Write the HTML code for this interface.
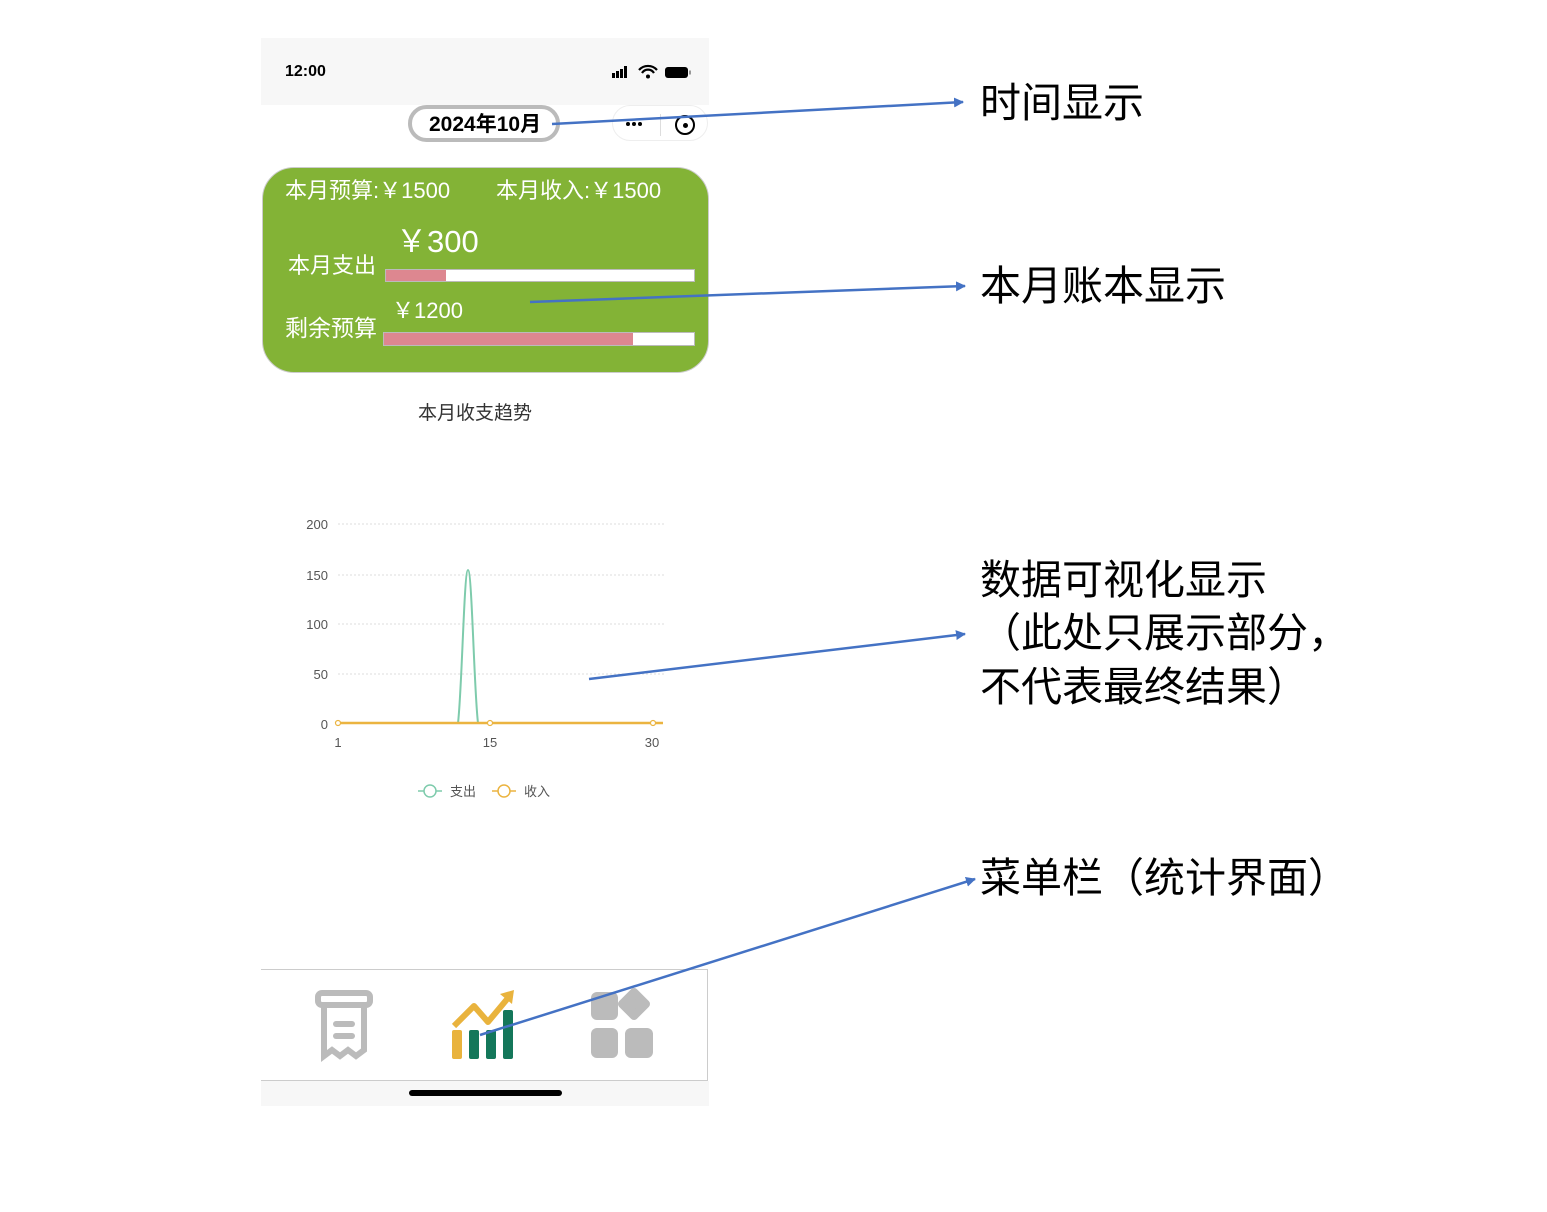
<!DOCTYPE html>
<html><head><meta charset="utf-8"><style>
body{margin:0;width:1547px;height:1212px;background:#fff;position:relative;overflow:hidden;font-family:"Liberation Sans","Noto Sans CJK SC",sans-serif}
.a{position:absolute;white-space:nowrap}
.w{color:#fff}
.ann{font-size:41px;color:#000;line-height:53px}
</style></head><body>
<div class="a" style="left:261px;top:38px;width:448px;height:67px;background:#f7f7f7"></div>
<div class="a" style="left:285px;top:63px;font-size:16px;font-weight:bold">12:00</div>
<svg class="a" style="left:610px;top:62px" width="84" height="20">
<rect x="2" y="11" width="3" height="5" fill="#000"/><rect x="6" y="9" width="3" height="7" fill="#000"/><rect x="10" y="7" width="3" height="9" fill="#000"/><rect x="14" y="4" width="3" height="12" fill="#000"/>
<path d="M29 8a12 12 0 0 1 18 0M32 11a7 7 0 0 1 12 0" stroke="#000" stroke-width="2.2" fill="none"/><circle cx="38" cy="14.5" r="2" fill="#000"/>
<rect x="55" y="5" width="23" height="11" rx="3" fill="#000"/><rect x="79" y="8.5" width="2" height="4" fill="#999"/>
</svg>
<div class="a" style="left:408px;top:105px;width:152px;height:37px;border:4px solid #bbb;border-radius:22px;box-sizing:border-box;background:#fff"></div>
<div class="a" style="left:429px;top:111px;font-size:21px;font-weight:bold;line-height:28px">2024年10月</div>
<div class="a" style="left:612px;top:105px;width:96px;height:36px;border:1px solid #eee;border-radius:18px;box-sizing:border-box"></div>
<div class="a" style="left:626px;top:122px;width:4px;height:4px;border-radius:2px;background:#000;box-shadow:6px 0 0 #000,12px 0 0 #000"></div>
<div class="a" style="left:660px;top:114px;width:1px;height:22px;background:#ddd"></div>
<div class="a" style="left:675px;top:115px;width:16px;height:16px;border:2px solid #000;border-radius:50%"></div>
<div class="a" style="left:683px;top:123px;width:5px;height:5px;background:#000;border-radius:50%"></div>

<div class="a" style="left:262px;top:167px;width:447px;height:206px;background:#83b336;border-radius:32px;border:1px solid #ccc;box-sizing:border-box"></div>
<div class="a w" style="left:285px;top:176px;font-size:22px;line-height:30px">本月预算:￥1500</div>
<div class="a w" style="left:496px;top:176px;font-size:22px;line-height:30px">本月收入:￥1500</div>
<div class="a w" style="left:396px;top:222px;font-size:31px;line-height:40px">￥300</div>
<div class="a w" style="left:288px;top:251px;font-size:22px;line-height:30px">本月支出</div>
<div class="a" style="left:385px;top:269px;width:310px;height:13px;background:#fff;border:1px solid #bbb;box-sizing:border-box"></div>
<div class="a" style="left:386px;top:270px;width:60px;height:11px;background:#dd8790"></div>
<div class="a w" style="left:392px;top:296px;font-size:22px;line-height:30px">￥1200</div>
<div class="a w" style="left:285px;top:313px;font-size:23px;line-height:30px">剩余预算</div>
<div class="a" style="left:383px;top:332px;width:312px;height:14px;background:#fff;border:1px solid #bbb;box-sizing:border-box"></div>
<div class="a" style="left:384px;top:333px;width:249px;height:12px;background:#dd8790"></div>

<div class="a" style="left:418px;top:398px;font-size:19px;color:#333">本月收支趋势</div>

<svg class="a" style="left:290px;top:500px" width="400" height="310" font-family="Liberation Sans" font-size="13" fill="#555">
<g stroke="#ddd" stroke-dasharray="2 2" stroke-width="1"><line x1="48" y1="24" x2="375" y2="24"/><line x1="48" y1="75" x2="375" y2="75"/><line x1="48" y1="124" x2="375" y2="124"/><line x1="48" y1="174" x2="375" y2="174"/></g>
<text x="38" y="29" text-anchor="end">200</text><text x="38" y="80" text-anchor="end">150</text><text x="38" y="129" text-anchor="end">100</text><text x="38" y="179" text-anchor="end">50</text><text x="38" y="229" text-anchor="end">0</text>
<text x="48" y="247" text-anchor="middle">1</text><text x="200" y="247" text-anchor="middle">15</text><text x="362" y="247" text-anchor="middle">30</text>
<path d="M168 223 C172 190 174 70 178 70 C182 70 184 190 188 223" stroke="#7ecbac" stroke-width="2" fill="none"/>
<line x1="48" y1="223" x2="373" y2="223" stroke="#ebb440" stroke-width="2.5"/>
<g fill="#fff" stroke="#ebb440" stroke-width="1.2"><circle cx="48" cy="223" r="2.5"/><circle cx="200" cy="223" r="2.5"/><circle cx="363" cy="223" r="2.5"/></g>
<line x1="128" y1="291" x2="152" y2="291" stroke="#7ecbac" stroke-width="1.5"/><circle cx="140" cy="291" r="6" fill="#fff" stroke="#7ecbac" stroke-width="1.5"/>
<text x="160" y="296" font-family="Noto Sans CJK SC" font-size="13">支出</text>
<line x1="202" y1="291" x2="226" y2="291" stroke="#ebb440" stroke-width="1.5"/><circle cx="214" cy="291" r="6" fill="#fff" stroke="#ebb440" stroke-width="1.5"/>
<text x="234" y="296" font-family="Noto Sans CJK SC" font-size="13">收入</text>
</svg>

<div class="a" style="left:261px;top:969px;width:447px;height:112px;border:1px solid #ccc;border-left:none;box-sizing:border-box"></div>
<div class="a" style="left:261px;top:1081px;width:448px;height:25px;background:#f7f7f7"></div>
<div class="a" style="left:409px;top:1090px;width:153px;height:6px;border-radius:3px;background:#000"></div>
<svg class="a" style="left:310px;top:988px" width="70" height="74" fill="none" stroke="#bbb" stroke-width="6" stroke-linecap="round">
<rect x="8" y="5" width="52" height="12" rx="4"/><path d="M14 20v48l8-6 8 6 8-6 8 6 8-6V20"/><line x1="26" y1="36" x2="42" y2="36"/><line x1="26" y1="48" x2="42" y2="48"/>
</svg>
<svg class="a" style="left:448px;top:988px" width="72" height="74">
<rect x="4" y="42" width="10" height="29" rx="2" fill="#e9b33d"/>
<rect x="21" y="42" width="10" height="29" rx="2" fill="#14775a"/><rect x="38" y="42" width="10" height="29" rx="2" fill="#14775a"/><rect x="55" y="22" width="10" height="49" rx="2" fill="#14775a"/>
<path d="M6 38L26 18 40 34 60 10" stroke="#e9b33d" stroke-width="6" fill="none" stroke-linejoin="round"/><path d="M52 6L66 2 64 16Z" fill="#e9b33d"/>
</svg>
<svg class="a" style="left:588px;top:988px" width="70" height="74" fill="#bbb">
<rect x="3" y="4" width="27" height="28" rx="6"/>
<path d="M46 4L58 16 46 28 34 16Z" stroke="#bbb" stroke-width="8" stroke-linejoin="round"/>
<rect x="3" y="40" width="27" height="30" rx="6"/><rect x="37" y="40" width="28" height="30" rx="6"/>
</svg>

<svg class="a" style="left:0;top:0" width="1547" height="1212">
<defs><marker id="m" markerWidth="10" markerHeight="10" refX="9" refY="5" orient="auto" markerUnits="userSpaceOnUse"><path d="M0 0L10 5 0 10Z" fill="#4472c4"/></marker></defs>
<g stroke="#4472c4" stroke-width="2.5" fill="none" marker-end="url(#m)">
<line x1="552" y1="124" x2="963" y2="102"/>
<line x1="530" y1="302" x2="965" y2="286"/>
<line x1="589" y1="679" x2="965" y2="634"/>
<line x1="480" y1="1035" x2="975" y2="879"/>
</g></svg>
<div class="a ann" style="left:980px;top:77px">时间显示</div>
<div class="a ann" style="left:980px;top:260px">本月账本显示</div>
<div class="a ann" style="left:980px;top:554px">数据可视化显示</div>
<div class="a ann" style="left:980px;top:607px">（此处只展示部分，</div>
<div class="a ann" style="left:980px;top:661px">不代表最终结果）</div>
<div class="a ann" style="left:980px;top:852px">菜单栏（统计界面）</div>
</body></html>
